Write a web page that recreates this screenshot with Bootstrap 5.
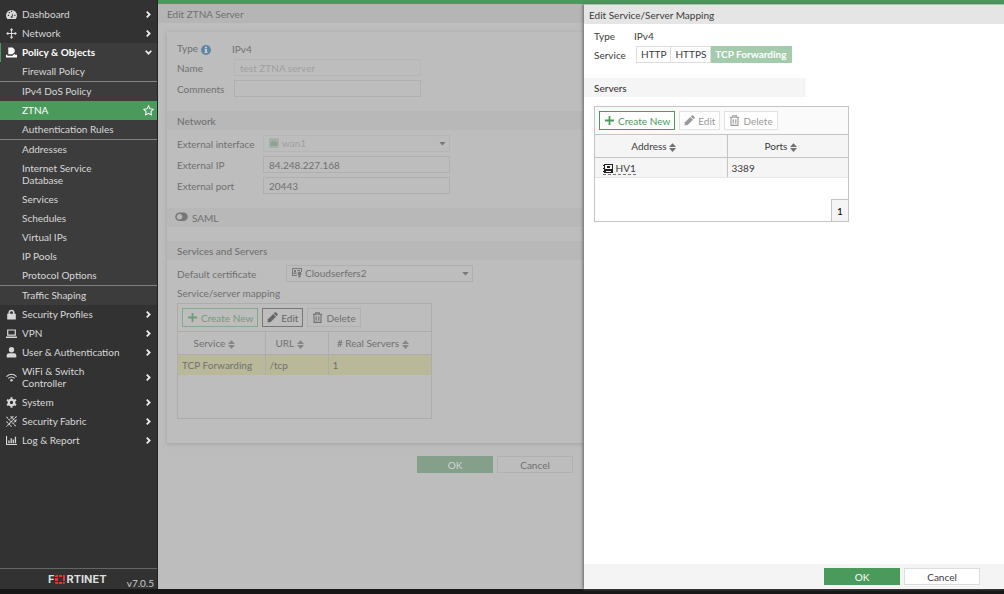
<!DOCTYPE html>
<html lang="en">
<head>
<meta charset="utf-8">
<meta name="viewport" content="width=device-width, initial-scale=1">
<title>Edit ZTNA Server</title>
<link href="https://cdn.jsdelivr.net/npm/bootstrap@5.3.0/dist/css/bootstrap.min.css" rel="stylesheet">
<style>
:root{--green:#4a9a5b}
html,body{height:100%}
body{font:10px/12px Lato,sans-serif;color:#3a3a3a;background:#bdbdbd}
svg{flex:none}
svg:not([fill]){fill:currentColor}
.app{border-bottom:5px solid #171717;position:relative;min-height:100vh}
/* sidebar */
.side{width:158px;flex:none;background:#323232;border-right:1px solid #222;padding-top:5px}
.side a{display:flex;align-items:center;padding:3px 5px 4px 22px;color:#d8d8d8;text-decoration:none;min-height:19px}
.side a.top{padding-left:6px}
.side a.top>svg:first-child{width:11px;height:11px;margin-right:5px}
.side a span{flex:1}
.side svg.chev{width:7px;height:7px;fill:none;stroke:#eee;stroke-width:2}
.side .open-menu{background:#3c3c3c}
.side a.head{border-left:1px solid var(--green);padding-left:5px;color:#fff;font-weight:700}
.side .rule{border-top:1px solid #828282}
.side a.active{background:var(--green);color:#fff;padding-right:3px}
.brand{border-top:1px solid #666;height:21px;padding-left:48px;padding-right:3px}
.brand b{font:700 11px/12px Inter,sans-serif;color:#ddd}
/* form page */
.work{border-top:4px solid var(--green);color:#707070;min-width:0;overflow:hidden}
.titlebar{height:19px;background:#b5b5b5;padding:4px 9px}
.sheet{max-width:658px}
.panel{margin:9px 0 13px 9px;padding:10px 0 24px;box-shadow:0 1px 4px #8888}
.line{display:flex;align-items:center;height:17px;margin:0 0 4px 10px}
.line.plain{height:13px}
.line>label,.line>.cap{flex:none;width:57px}
.wide>label{width:86px}
.wider>label{width:109px}
.section{height:19px;padding:4px 10px;margin:14px 0 5px;background:#b8b8b8;font-size:10px;line-height:12px}
.box{width:187px;height:17px;border:1px solid #b0b0b0;border-radius:0;background:transparent;color:#707070;padding:0 5px;font-size:10px;line-height:15px;outline:0}
.box:disabled{color:#a0a0a0;border-color:#b6b6b6;opacity:1}
.pick{position:relative;color:#777}
.pick select{appearance:none;padding-left:18px}
.pick svg{position:absolute;top:3px;pointer-events:none}
.pick .lead-ico{left:6px}
.pick .caret{right:4px;top:7px}
/* grids */
.grid-box{width:255px;border:1px solid #adadad}
.tools{display:flex;gap:4px;padding:4px;height:27px}
.tools button,.act{display:inline-flex;align-items:center;justify-content:center;gap:3px;height:19px;padding:0 4px;border:1px solid #b1b1b1;background:transparent;color:inherit;font-size:10px;line-height:12px;white-space:nowrap}
.tools svg{width:11px;height:11px}
.grid-box table{width:100%;table-layout:fixed;margin:0}
.grid-box th{height:23px;padding:0 14px 0 0;text-align:center;font-weight:400;border-top:1px solid #adadad;border-bottom:1px solid #adadad}
.grid-box th svg{opacity:.7}
.grid-box td{height:20px;padding:0 4px}
.grid-box th+th,.grid-box td+td{border-left:1px solid #adadad}
.act{width:76px;height:17px}
/* drawer */
.drawer{position:absolute;top:4px;right:0;bottom:0;width:420px;background:#fff;border-top:1px solid #9ccba5;box-shadow:-1px 0 3px #666}
.drawer .titlebar{background:#e5e5e5;padding:4px 5px}
.drawer .section{background:#f5f5f5;width:222px;margin:11px 0 9px}
.drawer .grid-box{margin-left:10px;border-color:#c4c4c4;background:#fff}
.drawer .tools{background:#fafafa}
.drawer th,.drawer td{background:#f5f5f5;border-color:#c4c4c4!important}
.drawer tbody td{border-bottom:1px solid #e6e6e6!important}
.drawer .tools button{border-color:#e2e2e2;color:#999;background:#fff}
.drawer .tools button:first-child{border-color:var(--green);color:var(--green)}
.seg label{height:17px;border:1px solid #ddd;padding:1px 4px;line-height:13px;cursor:pointer}
.seg label+input+label{border-left:0}
.seg .btn-check:checked+label{background:#a4cbac;border-color:#a4cbac;color:#fff;font-weight:700}
.pager{width:17px;height:22px;border:1px solid #c4c4c4;border-width:1px 0 0 1px;background:#f5f5f5;padding:0;line-height:20px}
.foot{background:#f4f4f4;height:25px;padding:4px 24px 0 0;gap:4px}
</style>
</head>
<body>
<svg class="d-none">
<symbol id="chev" viewBox="0 0 8 8"><path d="M2 .8 5.3 4 2 7.2"/></symbol>
<symbol id="plus" viewBox="0 0 12 12"><path d="M5 1h2v4h4v2H7v4H5V7H1V5h4z"/></symbol>
<symbol id="pen" viewBox="0 0 12 12"><path d="m1 8 5.800-5.800 3 3L4 11l-3.400.5z"/><path d="M7.500 1.500 8.600.4h1.200l1.800 1.800v1.200L10.500 4.500z"/></symbol>
<symbol id="bin" viewBox="0 0 12 12"><path fill="none" stroke="currentColor" stroke-width="1.200" d="M1 2.500h10M4 2.500V.8h4v1.700M2.200 2.500v8.800h7.600V2.500M4.600 4.500v5M7.400 4.500v5"/></symbol>
<symbol id="sort" viewBox="0 0 8 10"><path d="M4 0 8 4.300H0zM4 10 0 5.700h8z"/></symbol>
<symbol id="down" viewBox="0 0 8 5"><path d="M0 0h8L4 4.500z"/></symbol>
</svg>
<div class="app d-flex">
<nav class="side d-flex flex-column">
<a class="top" href="#"><svg viewBox="0 0 12 12"><path fill-rule="evenodd" d="M1.500 11A6 6 0 1 1 10.500 11zM5 9.500h2L7.800 4 6 7.500Q5 8 5 9.500M2 6.200v1.300h1.300V6.200zM3 3.300v1.300h1.300V3.300zM5.400 2v1.300h1.300V2zM9 6.200v1.300h1.300V6.200z"/></svg><span>Dashboard</span><svg class="chev"><use href="#chev"/></svg></a>
<a class="top" href="#"><svg viewBox="0 0 12 12"><path d="m6 0 2 2.500H6.600v2.900h2.900V4L12 6 9.500 8V6.600H6.600v2.900H8L6 12 4 9.500h1.400V6.600H2.500V8L0 6l2.500-2v1.400h2.900V2.500H4z"/></svg><span>Network</span><svg class="chev"><use href="#chev"/></svg></a>
<div class="open-menu">
<a class="top head" href="#"><svg viewBox="0 0 12 12"><path d="M2.500.5h4.800L9.500 3v2.500L7 8H2.500zM0 8.500h1.500V9.500H7L9.500 7v1.500H12V11.500H0z"/></svg><span>Policy &amp; Objects</span><svg class="chev" viewBox="0 0 8 8"><path d="M.8 2 4 5.300 7.200 2"/></svg></a>
<a href="#">Firewall Policy</a>
<a class="rule" href="#">IPv4 DoS Policy</a>
<a class="active" href="#"><span>ZTNA</span><svg width="11" height="11" viewBox="0 0 12 12"><path fill="none" stroke="#fff" stroke-width="1.100" d="m6 .9 1.600 3.300 3.600.5-2.600 2.500.6 3.600L6 9.100l-3.200 1.700.6-3.600L.8 4.700l3.600-.5z"/></svg></a>
<a href="#">Authentication Rules</a>
<a class="rule" href="#">Addresses</a>
<a href="#">Internet Service<br>Database</a>
<a href="#">Services</a>
<a href="#">Schedules</a>
<a href="#">Virtual IPs</a>
<a href="#">IP Pools</a>
<a href="#">Protocol Options</a>
<a class="rule" href="#">Traffic Shaping</a>
</div>
<a class="top" href="#"><svg viewBox="0 0 12 12"><path fill-rule="evenodd" d="M1.300 5.300h1.400V4a3.300 3.300 0 0 1 6.600 0v1.300h1.400v6.200H1.300zM4.400 5.300h3.200V4a1.600 1.600 0 0 0-3.200 0z"/></svg><span>Security Profiles</span><svg class="chev"><use href="#chev"/></svg></a>
<a class="top" href="#"><svg viewBox="0 0 12 12"><path fill-rule="evenodd" d="M1.200 1.500h9.600v7H1.200zM2.500 2.800v4.400h7V2.800zM0 9.300h12v1.500H0z"/></svg><span>VPN</span><svg class="chev"><use href="#chev"/></svg></a>
<a class="top" href="#"><svg viewBox="0 0 12 12"><circle cx="6" cy="3" r="2.900"/><path d="M.8 11.500V9q0-2.300 2.500-2.300h5.400q2.500 0 2.500 2.300v2.500z"/></svg><span>User &amp; Authentication</span><svg class="chev"><use href="#chev"/></svg></a>
<a class="top" href="#"><svg viewBox="0 0 12 12"><path fill="none" stroke="currentColor" stroke-width="1.200" d="M.5 5Q6 0 11.500 5M2.500 7Q6 4 9.500 7"/><circle cx="6" cy="9" r="1.300"/></svg><span>WiFi &amp; Switch<br>Controller</span><svg class="chev"><use href="#chev"/></svg></a>
<a class="top" href="#"><svg viewBox="0 0 12 12"><circle cx="6" cy="6" r="3" fill="none" stroke="currentColor" stroke-width="2.400"/><path stroke="currentColor" stroke-width="2.200" d="M6 .4v2M6 9.600v2M1.100 3.200l1.800 1M9.100 7.800l1.800 1M1.100 8.800l1.800-1M9.100 4.200l1.800-1"/></svg><span>System</span><svg class="chev"><use href="#chev"/></svg></a>
<a class="top" href="#"><svg viewBox="0 0 12 12"><path stroke="currentColor" stroke-width="1.100" stroke-dasharray="2.200 .8" d="m.5 1 10.500 10.500M5 .5l6.500 6.500M.5 6l5.500 5.500M11.500.5.5 11.500M8 .2l-3 3M11.500 4l-3 3"/></svg><span>Security Fabric</span><svg class="chev"><use href="#chev"/></svg></a>
<a class="top" href="#"><svg viewBox="0 0 12 12"><path d="M0 1h1.200v8.800H12V11H0zM2.500 6H4v3H2.500zM5 3.500h1.400V9H5zM7.300 5h1.400v4H7.300zM9.600 2H11v7H9.600z"/></svg><span>Log &amp; Report</span><svg class="chev"><use href="#chev"/></svg></a>
<div class="brand mt-auto d-flex align-items-center justify-content-between">
<b class="d-flex align-items-center">F<svg class="mx-auto" width="12" height="9" viewBox="-1 0 12 9" fill="#e03a2c"><path d="M1 0h2v2H0V1zM4 0h3v2H4zM8 0h2v3H8zM0 3h3v3H0zM8 3h2v3H8zM0 7h3v2H1L0 8zM4 7h3v2H4zM8 7h2v1l-1 1H8z"/></svg>RTINET</b>
<span class="pt-2" style="color:#ccc">v7.0.5</span>
</div>
</nav>
<main class="work flex-grow-1">
<div class="titlebar">Edit ZTNA Server</div>
<form class="sheet">
<div class="panel">
<div class="line plain"><span class="cap" style="width:55px">Type <svg width="10" height="10" viewBox="0 0 10 10"><circle cx="5" cy="5" r="5" fill="#5d87a5"/><path fill="#ccc" d="M4 1.800h2v1.500H4zM3.500 4H6v3h.6v1H3.500V7H4V5h-.5z"/></svg></span><span>IPv4</span></div>
<div class="line"><label for="nm">Name</label><input class="box" id="nm" value="test ZTNA server" disabled></div>
<div class="line"><label for="cm">Comments</label><input class="box" id="cm"></div>
<h2 class="section">Network</h2>
<div class="line wide"><label for="ifc">External interface</label><div class="pick"><select class="box" id="ifc" disabled><option>wan1</option></select><svg class="lead-ico" width="10" height="10" viewBox="0 0 10 10"><rect width="10" height="10" rx="1" fill="#a6b2a8"/><path fill="#8da391" d="M1.500 8V4H3V2.500h1.500V4h1V2.500H7V4h1.500v4z"/></svg><svg class="caret" width="7" height="4" viewBox="0 0 8 5"><use href="#down"/></svg></div></div>
<div class="line wide"><label for="ip">External IP</label><input class="box" id="ip" value="84.248.227.168"></div>
<div class="line wide"><label for="pt">External port</label><input class="box" id="pt" value="20443"></div>
<div class="section d-flex"><button type="button" role="switch" aria-checked="false" aria-labelledby="saml" class="border-0 p-0 bg-transparent d-flex" style="margin-left:-2px"><svg width="13" height="10" viewBox="0 0 13 10"><path fill="#777" fill-rule="evenodd" d="M4.500.5h4a4.300 4.300 0 0 1 0 8.600h-4a4.300 4.300 0 0 1 0-8.600m0 1.500a2.800 2.800 0 1 0 .1 0"/></svg></button><span id="saml" class="ms-1">SAML</span></div>
<h2 class="section">Services and Servers</h2>
<div class="line wider"><label for="crt">Default certificate</label><div class="pick"><select class="box" id="crt"><option>Cloudserfers2</option></select><svg class="lead-ico" width="10" height="10" viewBox="0 0 10 10"><path fill-rule="evenodd" d="M0 0h10v4H9V1H1v6h4v1H0zM2 2h2v2H2zM1.500 4.500h3V6h-3zM5 2h3v1H5zM7.500 3.500a2 2 0 0 1 1 3.700V10l-1-1-1 1V7.200a2 2 0 0 1 1-3.700"/></svg><svg class="caret" width="7" height="4" viewBox="0 0 8 5"><use href="#down"/></svg></div></div>
<div class="line plain">Service/server mapping</div>
<div class="grid-box" style="margin-left:10px;height:116px">
<div class="tools"><button type="button" style="color:#6f9e7a;border-color:#86a98e"><svg><use href="#plus"/></svg>Create New</button><button type="button" style="color:#666;border-color:#777"><svg><use href="#pen"/></svg>Edit</button><button type="button"><svg><use href="#bin"/></svg>Delete</button></div>
<table><colgroup><col style="width:87px"><col style="width:63px"><col></colgroup>
<thead><tr><th>Service <svg width="7" height="9"><use href="#sort"/></svg></th><th>URL <svg width="7" height="9"><use href="#sort"/></svg></th><th># Real Servers <svg width="7" height="9"><use href="#sort"/></svg></th></tr></thead>
<tbody style="background:#b9b99a"><tr><td>TCP Forwarding</td><td>/tcp</td><td>1</td></tr></tbody></table>
</div>
</div>
<div class="d-flex justify-content-center gap-1 ps-3"><button type="button" class="act" style="background:#849f8a;border-color:#849f8a;color:#d4d4d4">OK</button><button type="button" class="act">Cancel</button></div>
</form>
</main>
<aside class="drawer d-flex flex-column">
<div class="titlebar">Edit Service/Server Mapping</div>
<div class="line plain" style="margin-top:5px"><span class="cap" style="width:40px">Type</span>IPv4</div>
<div class="line"><span class="cap" style="width:42px">Service</span><div class="seg d-flex" role="group" aria-label="Service">
<input class="btn-check" type="radio" name="svc" id="s1"><label for="s1">HTTP</label><input class="btn-check" type="radio" name="svc" id="s2"><label for="s2">HTTPS</label><input class="btn-check" type="radio" name="svc" id="s3" checked><label for="s3">TCP Forwarding</label></div></div>
<h2 class="section">Servers</h2>
<div class="grid-box">
<div class="tools"><button type="button"><svg><use href="#plus"/></svg>Create New</button><button type="button" disabled><svg><use href="#pen"/></svg>Edit</button><button type="button" disabled><svg><use href="#bin"/></svg>Delete</button></div>
<table><colgroup><col style="width:132px"><col></colgroup>
<thead><tr><th>Address <svg width="7" height="9"><use href="#sort"/></svg></th><th>Ports <svg width="7" height="9"><use href="#sort"/></svg></th></tr></thead>
<tbody><tr><td><span class="ms-1" style="border-bottom:1px dashed #777"><svg width="10" height="9" viewBox="0 0 10 9" fill="#222"><path fill-rule="evenodd" d="M1 0h9v9H1V8H0V7h1V5H0V4h1V2H0V1h1zM2 1v4h7V1zM4 2h3v2H4zM3 7v1h5V7z"/></svg> HV1</span></td><td>3389</td></tr></tbody></table>
<div class="d-flex justify-content-end" style="padding-top:21px"><button type="button" class="pager">1</button></div>
</div>
<div class="foot d-flex justify-content-end mt-auto"><button type="button" class="act" style="background:var(--green);border-color:var(--green);color:#fff">OK</button><button type="button" class="act" style="background:#fff;border-color:#ddd">Cancel</button></div>
</aside>
</div>
<script src="https://cdn.jsdelivr.net/npm/bootstrap@5.3.0/dist/js/bootstrap.bundle.min.js"></script>
</body>
</html>
